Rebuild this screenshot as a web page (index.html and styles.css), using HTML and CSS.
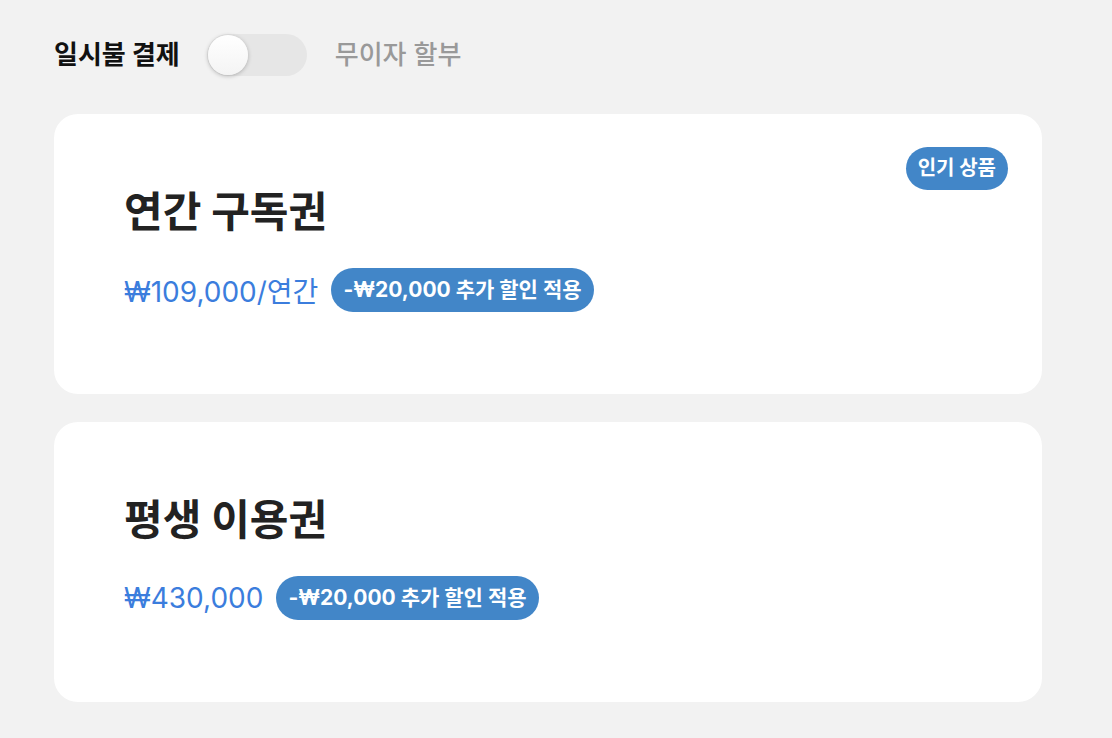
FILE: index.html
```html
<!DOCTYPE html>
<html lang="ko">
<head>
<meta charset="UTF-8" />
<title>구독 상품</title>
<link rel="stylesheet" href="styles.css">
</head>
<body>
<div class="page">
	<div class="pay-type">
		<span class="pay-label on">일시불 결제</span>
		<span class="toggle"><span class="knob"></span></span>
		<span class="pay-label">무이자 할부</span>
	</div>
	<div class="plan">
		<span class="hot">인기 상품</span>
		<h2>연간 구독권</h2>
		<div class="price-row">
			<span class="price">₩109,000/연간</span>
			<span class="sale">-₩20,000 추가 할인 적용</span>
		</div>
	</div>
	<div class="plan">
		<h2>평생 이용권</h2>
		<div class="price-row">
			<span class="price">₩430,000</span>
			<span class="sale">-₩20,000 추가 할인 적용</span>
		</div>
	</div>
</div>
</body>
</html>
```
FILE: styles.css
```css
body{
	margin: 0;
	background: #f2f2f2;
	font-family: Inter, "Noto Sans CJK KR", sans-serif;
}
.page{
	padding: 34px 70px 0 54px;
}
.pay-type{
	display: flex;
	align-items: center;
	gap: 27px;
	height: 42px;
	margin-bottom: 38px;
}
.pay-label{
	font-size: 26px;
	font-weight: 500;
	color: #999;
	padding-bottom: 5px;
}
.pay-label.on{
	color: #111;
	font-weight: 700;
}
.toggle{
	width: 100px;
	height: 42px;
	border-radius: 21px;
	background: #e6e6e6;
	display: flex;
	align-items: center;
	padding-left: 1px;
	box-sizing: border-box;
	margin-right: 1px;
}
.knob{
	width: 40px;
	height: 40px;
	border-radius: 50%;
	background: linear-gradient(#fff, #f4f4f4);
	box-shadow: 0 1px 4px rgba(0,0,0,0.25);
}
.plan{
	position: relative;
	width: 988px;
	box-sizing: border-box;
	height: 280px;
	background: #fff;
	border-radius: 24px;
	padding: 70px 70px 0;
	margin-bottom: 28px;
}
.plan h2{
	margin: 0;
	font-size: 42px;
	line-height: 56px;
	font-weight: 700;
	color: #222;
}
.price-row{
	display: flex;
	align-items: center;
	gap: 13px;
	margin-top: 28px;
}
.price{
	font-size: 28px;
	color: #3b7ddd;
}
.sale, .hot{
	background: #4286c8;
	color: #fff;
	font-weight: 700;
	font-size: 21px;
	line-height: 44px;
	height: 44px;
	padding: 0 12px;
	border-radius: 22px;
}
.hot{
	position: absolute;
	top: 33px;
	right: 34px;
	font-size: 20px;
	line-height: 43px;
	height: 43px;
}
```
